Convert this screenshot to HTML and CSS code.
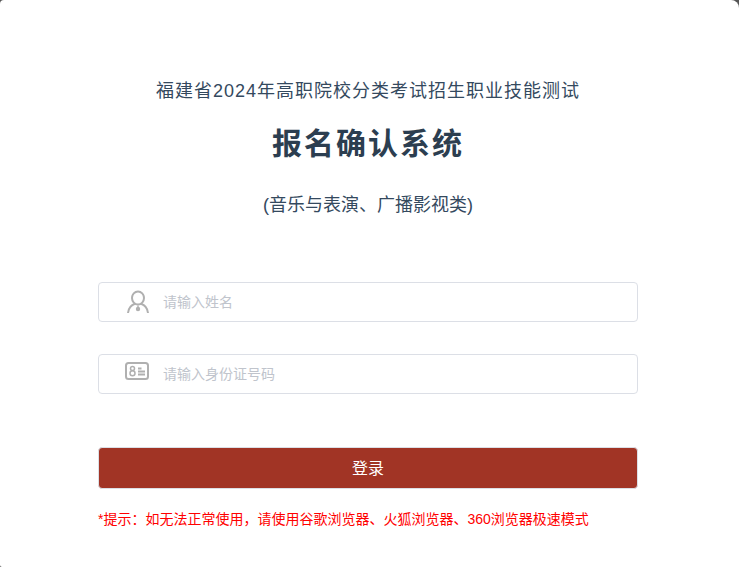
FILE: index.html
```html
<!DOCTYPE html>
<html lang="zh-CN">
<head>
<meta charset="UTF-8">
<title>报名确认系统</title>
<link rel="stylesheet" href="styles.css">
</head>
<body>
<div class="card">
  <div class="head">
    <p class="sub">福建省2024年高职院校分类考试招生职业技能测试</p>
    <h1>报名确认系统</h1>
    <p class="kind">(音乐与表演、广播影视类)</p>
  </div>
  <form class="login">
    <label class="field">
      <svg class="icon" viewBox="0 0 24 24" width="24" height="24" fill="none" stroke="#b0b0b0" stroke-width="2">
        <ellipse cx="12" cy="8" rx="6" ry="6.5"/>
        <path d="M2 23c.6-5 3.3-8 7-9.2M22 23c-.6-5-3.3-8-7-9.2"/>
        <circle cx="12" cy="19" r="2.2" fill="#b0b0b0" stroke="none"/>
        <path d="M12 15.5v2" stroke-width="1.4"/>
      </svg>
      <input type="text" placeholder="请输入姓名">
    </label>
    <label class="field">
      <svg class="icon icon-id" viewBox="0 0 24 18" width="24" height="18" fill="none" stroke="#b0b0b0">
        <rect x="1" y="1" width="22" height="16" rx="2.5" stroke-width="2"/>
        <circle cx="7.5" cy="6.6" r="2" stroke-width="1.5"/>
        <circle cx="7.5" cy="11.2" r="2.5" stroke-width="1.5"/>
        <path d="M13 6.5h3.5M13 9.5h7M13 12.5h7" stroke-width="1.8"/>
      </svg>
      <input type="text" placeholder="请输入身份证号码">
    </label>
    <button class="submit" type="button">登录</button>
  </form>
  <p class="tip">*提示：如无法正常使用，请使用谷歌浏览器、火狐浏览器、360浏览器极速模式</p>
</div>
</body>
</html>
```

FILE: styles.css
```css
html, body { margin: 0; height: 100%; background: #555; overflow: hidden; }
body { font-family: "Liberation Sans", "Noto Sans CJK SC", sans-serif; color: #34495e; }
.card { height: 567px; box-sizing: border-box; background: #fff; border-radius: 4px 8px 0 2px; padding: 0 101px 0 98px; }
.head { padding-top: 79px; text-align: center; }
.sub { margin: 0; font-size: 18px; line-height: 24px; letter-spacing: 1px; }
h1 { margin: 21px 0 0; font-size: 30px; line-height: 40px; letter-spacing: 2px; color: #2c3e50; }
.kind { margin: 29px 0 0; font-size: 18px; line-height: 24px; }
.login { margin-top: 65px; }
.field { display: flex; align-items: center; height: 40px; box-sizing: border-box; border: 1px solid #dcdfe6; border-radius: 4px; margin-bottom: 32px; }
.icon { margin-left: 27px; flex: none; margin-top: -1px; }
.icon-id { margin-left: 26px; margin-top: -6px; }
.field input { flex: 1; min-width: 0; border: 0; outline: 0; padding: 0; margin-left: 13px; font: inherit; font-size: 14px; color: #606266; background: none; }
.field .icon-id + input { margin-left: 14px; }
.field input::placeholder { color: #c0c4cc; opacity: 1; }
.submit { display: block; width: 100%; height: 42px; margin-top: 53px; padding: 0 0 2px; border: 1px solid #dcdfe6; border-radius: 4px; background: #a13425; color: #fff; font: inherit; font-size: 16px; }
.tip { margin: 21px 0 0; font-size: 14px; line-height: 18px; color: #f00; white-space: nowrap; }
```
